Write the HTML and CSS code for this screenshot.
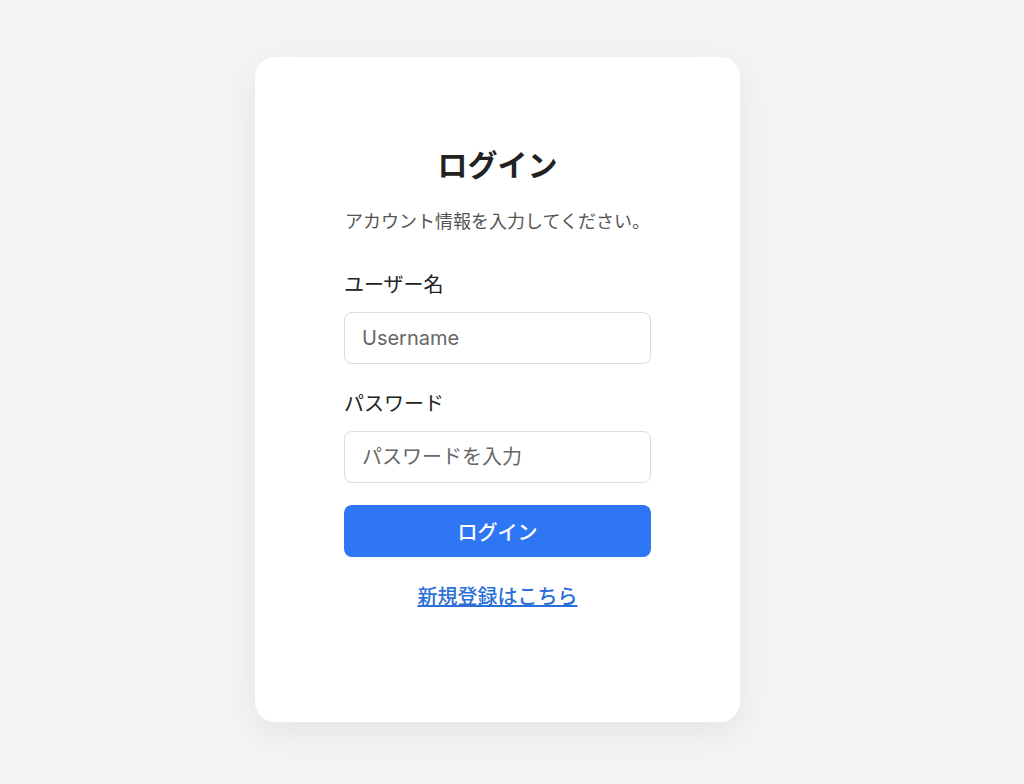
FILE: index.html
```html
<!DOCTYPE html>
<html lang="ja">
<head>
<meta charset="utf-8">
<title>ログイン</title>
<link rel="stylesheet" href="styles.css">
</head>
<body>
<main class="page">
  <section class="card">
    <h1 class="title">ログイン</h1>
    <p class="subtitle">アカウント情報を入力してください。</p>
    <form class="form">
      <label class="label" for="username">ユーザー名</label>
      <input class="input" id="username" type="text" placeholder="Username">
      <label class="label label-second" for="password">パスワード</label>
      <input class="input" id="password" type="password" placeholder="パスワードを入力">
      <button class="button" type="button">ログイン</button>
    </form>
    <a class="link" href="#">新規登録はこちら</a>
  </section>
</main>
</body>
</html>
```

FILE: styles.css
```css
* { box-sizing: border-box; }
html, body {
  margin: 0;
  padding: 0;
  background: #f4f4f6;
  font-family: "Noto Sans CJK JP", "Noto Sans", "Liberation Sans", sans-serif;
  color: #222;
}
.page {
  display: flex;
  justify-content: flex-start;
  padding: 57px 0 0 255px;
  min-height: 784px;
}
.card {
  width: 485px;
  height: 665px;
  background: #fff;
  border-radius: 20px;
  box-shadow: 0 10px 36px rgba(0, 0, 0, 0.07);
  padding: 89px 89px 0;
  display: flex;
  flex-direction: column;
  align-items: stretch;
}
.title {
  margin: 0;
  font-size: 30px;
  line-height: 34px;
  font-weight: 700;
  text-align: center;
  color: #222;
}
.subtitle {
  margin: 28px 0 0;
  font-size: 18px;
  line-height: 24px;
  text-align: center;
  color: #555;
}
.form {
  display: flex;
  flex-direction: column;
  margin-top: 39px;
}
.label {
  font-size: 20px;
  line-height: 26px;
  color: #222;
}
.label-second { margin-top: 26px; }
.input {
  margin-top: 15px;
  height: 52px;
  border: 1px solid #dcdcdc;
  border-radius: 8px;
  padding: 0 17px;
  font-family: "Inter", "Noto Sans CJK JP", sans-serif;
  font-size: 20px;
  color: #222;
  background: #fff;
  outline: none;
}
.input::placeholder { color: #666; }
.button {
  margin-top: 22px;
  height: 52px;
  border: none;
  border-radius: 8px;
  background: #2f76f5;
  color: #fff;
  font-family: inherit;
  font-size: 20px;
  font-weight: 500;
  cursor: pointer;
}
.link {
  margin-top: 25px;
  align-self: center;
  font-size: 20px;
  line-height: 28px;
  font-weight: 500;
  color: #2b6fd8;
  text-decoration: underline;
}
```
